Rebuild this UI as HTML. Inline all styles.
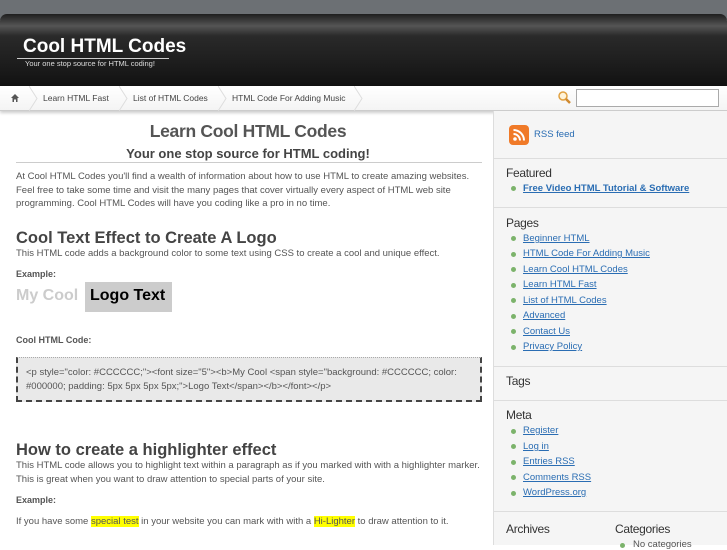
<!DOCTYPE html>
<html><head><meta charset="utf-8"><style>
*{margin:0;padding:0;box-sizing:border-box}
body{width:727px;height:545px;overflow:hidden;background:#fff;font-family:"Liberation Sans",sans-serif;position:relative;color:#555}
.a{position:absolute;white-space:nowrap}
#top{position:absolute;left:0;top:0;width:727px;height:20px;background:#6c7074}
#hdr{position:absolute;left:0;top:14px;width:727px;height:72px;border-radius:7px 7px 0 0;background:linear-gradient(#1e1e1e 0,#555 12px,#2a2a2a 22px,#181818 60px,#111 72px)}
#nav{position:absolute;left:0;top:86px;width:727px;height:25px;background:linear-gradient(#fff,#f4f4f4);border-bottom:1px solid #ccc;box-shadow:0 2px 3px rgba(0,0,0,.2)}
.sep{position:absolute;top:0;width:10px;height:25px}
#side{position:absolute;left:493px;top:111px;width:234px;height:434px;background:#f5f5f5;border-left:1px solid #ddd}
.hr{position:absolute;left:494px;width:233px;height:1px;background:#ddd}
.sh{font-size:12px;color:#333;letter-spacing:-.3px}
.li{font-size:9.5px;color:#2a6db3;text-decoration:underline}
.dot{position:absolute;width:5px;height:5px;border-radius:50%;background:#7cb36b}
.p{font-size:9.5px;color:#555;line-height:13.5px}
.h2{font-size:16.5px;font-weight:bold;color:#444}
</style></head><body>
<div id="top"></div>
<div id="hdr"></div>
<div class="a" style="left:23px;top:36px;font-size:19px;font-weight:bold;color:#fff">Cool HTML Codes</div>
<div style="position:absolute;left:17px;top:58px;width:152px;height:1px;background:#ccc"></div>
<div class="a" style="left:25px;top:59px;font-size:7.5px;color:#ddd">Your one stop source for HTML coding!</div>
<div id="nav"></div>
<svg class="a" style="left:10px;top:93px" width="10" height="10" viewBox="0 0 10 10"><path d="M5 1 L1 5 H2.5 V9 H4 V6.5 H6 V9 H7.5 V5 H9Z" fill="#555"/></svg>
<svg class="sep" style="left:29px;top:86px" viewBox="0 0 10 25"><path d="M0 0 L8 12.5 L0 25" fill="none" stroke="#ddd"/></svg>
<div class="a" style="left:43px;top:93px;font-size:8.5px;color:#444">Learn HTML Fast</div>
<svg class="sep" style="left:119px;top:86px" viewBox="0 0 10 25"><path d="M0 0 L8 12.5 L0 25" fill="none" stroke="#ddd"/></svg>
<div class="a" style="left:133px;top:93px;font-size:8.5px;color:#444">List of HTML Codes</div>
<svg class="sep" style="left:218px;top:86px" viewBox="0 0 10 25"><path d="M0 0 L8 12.5 L0 25" fill="none" stroke="#ddd"/></svg>
<div class="a" style="left:232px;top:93px;font-size:8.5px;color:#444">HTML Code For Adding Music</div>
<svg class="sep" style="left:354px;top:86px" viewBox="0 0 10 25"><path d="M0 0 L8 12.5 L0 25" fill="none" stroke="#ddd"/></svg>
<svg class="a" style="left:557px;top:90px" width="15" height="15" viewBox="0 0 15 15"><circle cx="6" cy="6" r="4" fill="#fff3d8" stroke="#e0a040" stroke-width="1.5"/><path d="M9 9 L13 13" stroke="#d08a30" stroke-width="2.5"/></svg>
<div class="a" style="left:576px;top:89px;width:143px;height:18px;border:1px solid #aaa;background:#fff"></div>

<div class="a" style="left:0;top:121px;width:496px;text-align:center;font-size:17.5px;font-weight:bold;color:#555;letter-spacing:-.3px">Learn Cool HTML Codes</div>
<div class="a" style="left:0;top:146px;width:496px;text-align:center;font-size:13px;font-weight:bold;color:#444">Your one stop source for HTML coding!</div>
<div style="position:absolute;left:16px;top:162px;width:466px;height:1px;background:#ccc"></div>
<div class="a p" style="left:16px;top:170px">At Cool HTML Codes you'll find a wealth of information about how to use HTML to create amazing websites.<br>Feel free to take some time and visit the many pages that cover virtually every aspect of HTML web site<br>programming. Cool HTML Codes will have you coding like a pro in no time.</div>
<div class="a h2" style="left:16px;top:229px">Cool Text Effect to Create A Logo</div>
<div class="a p" style="left:16px;top:247px">This HTML code adds a background color to some text using CSS to create a cool and unique effect.</div>
<div class="a" style="left:16px;top:269px;font-size:9px;font-weight:bold;color:#555">Example:</div>
<div class="a" style="left:16px;top:287px;font-size:16px;font-weight:bold;color:#ccc">My Cool</div>
<div class="a" style="left:85px;top:282px;width:87px;height:30px;background:#ccc"></div>
<div class="a" style="left:90px;top:287px;font-size:16px;font-weight:bold;color:#000">Logo Text</div>
<div class="a" style="left:16px;top:335px;font-size:9px;font-weight:bold;color:#555">Cool HTML Code:</div>
<div class="a" style="left:16px;top:357px;width:466px;height:45px;background:#e9e9e9;border:2px dashed #444;border-top:1px dotted #aaa"></div>
<div class="a p" style="left:26px;top:366px;font-size:9.5px">&lt;p style="color: #CCCCCC;"&gt;&lt;font size="5"&gt;&lt;b&gt;My Cool &lt;span style="background: #CCCCCC; color:<br>#000000; padding: 5px 5px 5px 5px;"&gt;Logo Text&lt;/span&gt;&lt;/b&gt;&lt;/font&gt;&lt;/p&gt;</div>
<div class="a h2" style="left:16px;top:441px">How to create a highlighter effect</div>
<div class="a p" style="left:16px;top:459px">This HTML code allows you to highlight text within a paragraph as if you marked with with a highlighter marker.<br>This is great when you want to draw attention to special parts of your site.</div>
<div class="a" style="left:16px;top:495px;font-size:9px;font-weight:bold;color:#555">Example:</div>
<div class="a p" style="left:16px;top:515px">If you have some <span style="background:#ff0">special test</span> in your website you can mark with with a <span style="background:#ff0">Hi-Lighter</span> to draw attention to it.</div>

<div id="side"></div>
<div class="a" style="left:509px;top:125px;width:20px;height:20px;border-radius:4px;background:#f07a28"></div>
<svg class="a" style="left:509px;top:125px" width="20" height="20" viewBox="0 0 20 20"><circle cx="6" cy="14" r="1.8" fill="#fff"/><path d="M4.5 9 A6.5 6.5 0 0 1 11 15.5 M4.5 5 A10.5 10.5 0 0 1 15 15.5" fill="none" stroke="#fff" stroke-width="2"/></svg>
<div class="a" style="left:534px;top:129px;font-size:9.5px;color:#2a6db3">RSS feed</div>
<div class="hr" style="top:158px"></div>
<div class="a sh" style="left:506px;top:166px">Featured</div>
<div class="dot" style="left:511px;top:186px"></div><div class="a li" style="left:523px;top:183px;font-weight:bold">Free Video HTML Tutorial &amp; Software</div>
<div class="hr" style="top:207px"></div>
<div class="a sh" style="left:506px;top:216px">Pages</div>
<div class="dot" style="left:511px;top:236px"></div><div class="a li" style="left:523px;top:233px">Beginner HTML</div>
<div class="dot" style="left:511px;top:252px"></div><div class="a li" style="left:523px;top:248px">HTML Code For Adding Music</div>
<div class="dot" style="left:511px;top:267px"></div><div class="a li" style="left:523px;top:264px">Learn Cool HTML Codes</div>
<div class="dot" style="left:511px;top:283px"></div><div class="a li" style="left:523px;top:279px">Learn HTML Fast</div>
<div class="dot" style="left:511px;top:298px"></div><div class="a li" style="left:523px;top:295px">List of HTML Codes</div>
<div class="dot" style="left:511px;top:314px"></div><div class="a li" style="left:523px;top:310px">Advanced</div>
<div class="dot" style="left:511px;top:329px"></div><div class="a li" style="left:523px;top:326px">Contact Us</div>
<div class="dot" style="left:511px;top:345px"></div><div class="a li" style="left:523px;top:341px">Privacy Policy</div>
<div class="hr" style="top:366px"></div>
<div class="a sh" style="left:506px;top:374px">Tags</div>
<div class="hr" style="top:400px"></div>
<div class="a sh" style="left:506px;top:408px">Meta</div>
<div class="dot" style="left:511px;top:429px"></div><div class="a li" style="left:523px;top:425px">Register</div>
<div class="dot" style="left:511px;top:444px"></div><div class="a li" style="left:523px;top:441px">Log in</div>
<div class="dot" style="left:511px;top:460px"></div><div class="a li" style="left:523px;top:456px">Entries RSS</div>
<div class="dot" style="left:511px;top:475px"></div><div class="a li" style="left:523px;top:472px">Comments RSS</div>
<div class="dot" style="left:511px;top:491px"></div><div class="a li" style="left:523px;top:487px">WordPress.org</div>
<div class="hr" style="top:511px"></div>
<div class="a sh" style="left:506px;top:522px">Archives</div>
<div class="a sh" style="left:615px;top:522px">Categories</div>
<div class="dot" style="left:620px;top:543px"></div><div class="a" style="left:633px;top:539px;font-size:9.5px;color:#555">No categories</div>
</body></html>
